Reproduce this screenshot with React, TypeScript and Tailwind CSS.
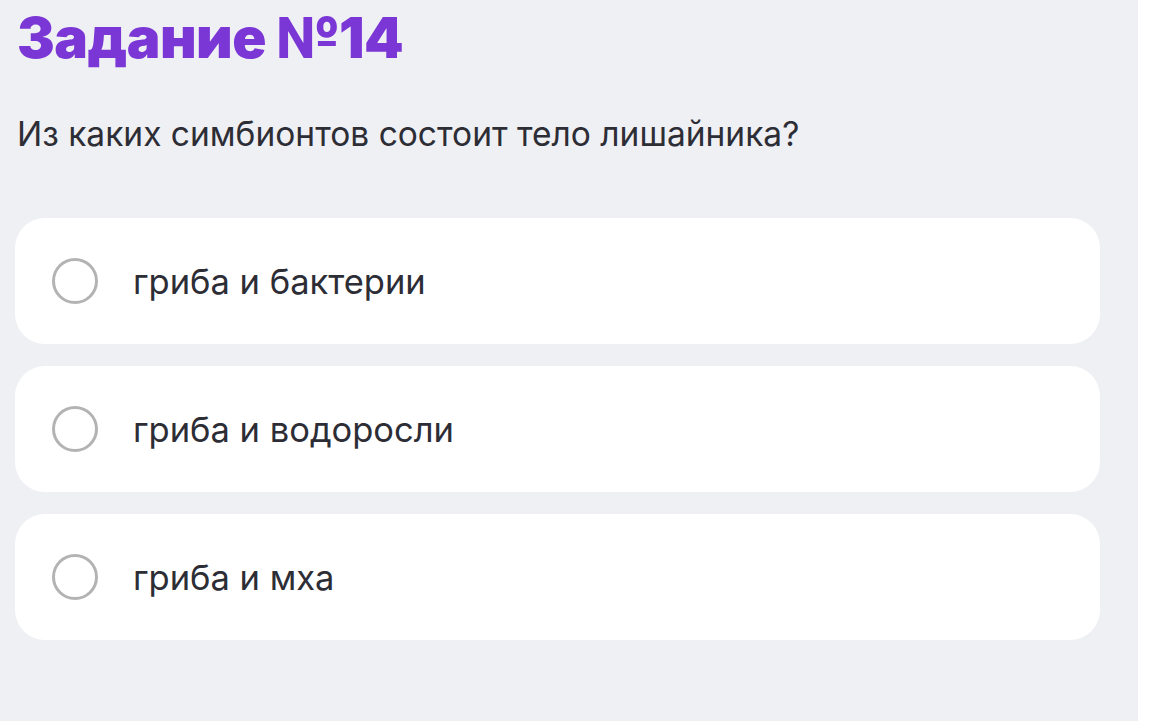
const options = ["гриба и бактерии", "гриба и водоросли", "гриба и мха"]

const App = () => {
    return (
        <div className="flex h-[721px] w-[1154px] bg-white" style={{ fontFamily: 'Inter, sans-serif' }}>
            <div className="flex w-[1138px] flex-col bg-[#eff0f3] pl-[15px] pr-[38px]">
                <h1 className="mt-[3px] pl-[2px] text-[56.5px] leading-[70px] font-black tracking-[-0.5px] text-[#7b36d6]">
                    Задание №14
                </h1>
                <p className="mt-[41px] pl-[2px] text-[33.5px] leading-[40px] text-[#2d2d36]">
                    Из каких симбионтов состоит тело лишайника?
                </p>
                <div className="mt-[64px] flex flex-col gap-[22px]">
                    {options.map((option, index) => (
                        <div key={index} className="flex h-[126px] items-center gap-[35px] rounded-[30px] bg-white pl-[37px]">
                            <span className="h-[46px] w-[46px] rounded-full border-[3px] border-[#b3b3b3]" />
                            <span className="pt-[2px] text-[34.5px] leading-[40px] text-[#2d2d36]">{option}</span>
                        </div>
                    ))}
                </div>
            </div>
        </div>
    )
}

export default App
